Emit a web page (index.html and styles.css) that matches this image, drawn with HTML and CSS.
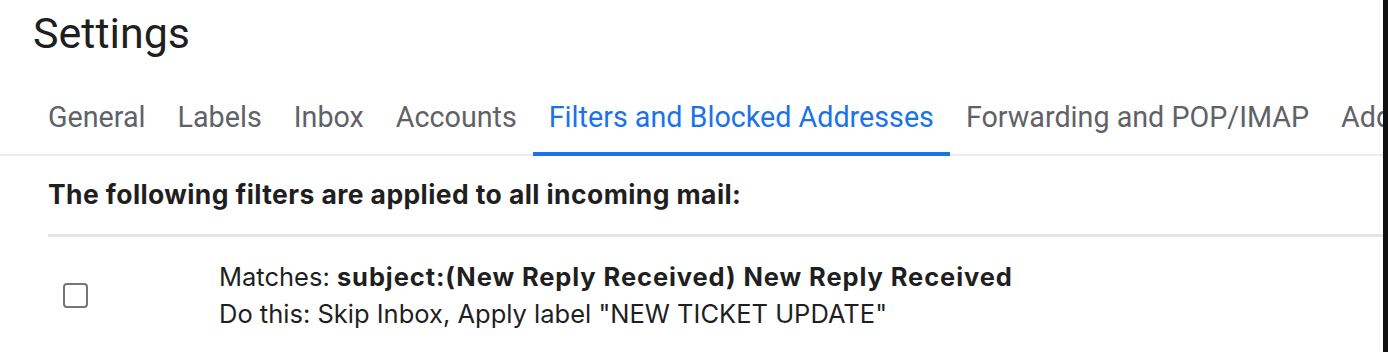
FILE: index.html
```html
<!DOCTYPE html>
<html>
  <head>
    <meta charset="UTF-8">
    <title>Settings</title>
    <link rel="stylesheet" href="styles.css">
  </head>
  <body>
    <div id="page">
      <div id="main">
        <h1 class="title">Settings</h1>
        <ul class="tabs">
          <li class="tab">General</li>
          <li class="tab">Labels</li>
          <li class="tab">Inbox</li>
          <li class="tab">Accounts</li>
          <li class="tab active">Filters and Blocked Addresses</li>
          <li class="tab">Forwarding and POP/IMAP</li>
          <li class="tab">Add-ons</li>
        </ul>
        <div id="content">
          <h4 class="heading">The following filters are applied to all incoming mail:</h4>
          <div class="filter">
            <div class="check-cell">
              <span class="checkbox"></span>
            </div>
            <div class="filter-text">
              <div>Matches: <b>subject:(New Reply Received) New Reply Received</b></div>
              <div>Do this: Skip Inbox, Apply label "NEW TICKET UPDATE"</div>
            </div>
          </div>
        </div>
      </div>
      <div id="edge"></div>
    </div>
  </body>
</html>
```

FILE: styles.css
```css
body {
    margin: 0;
    background-color: #fff;
    font-family: Roboto, "Liberation Sans", sans-serif;
    color: #1f1f1f;
}

#page {
    display: flex;
    height: 352px;
    overflow: hidden;
}

#main {
    flex: 1;
    min-width: 0;
    overflow: hidden;
}

#edge {
    width: 5px;
    background: #111;
}

.title {
    margin: 0;
    padding: 9px 0 0 33px;
    font-size: 43px;
    font-weight: 400;
    line-height: 48px;
    color: #1f1f1f;
}

.tabs {
    list-style-type: none;
    margin: 33px 0 0 0;
    padding: 0 0 0 32px;
    display: flex;
    white-space: nowrap;
    border-bottom: 2px solid #ececec;
}

.tab {
    padding: 9px 16px 17px 16px;
    font-size: 28.7px;
    line-height: 36px;
    color: #5f6368;
    border-bottom: 4px solid transparent;
    margin-bottom: -2px;
}

.tab.active {
    color: #1a73e8;
    border-bottom-color: #1a73e8;
}

#content {
    padding: 0 0 0 48px;
}

.heading {
    margin: 0;
    padding: 23px 0 25px 0;
    font-family: Inter, Roboto, sans-serif;
    font-size: 26.5px;
    letter-spacing: 0.4px;
    line-height: 30px;
    font-weight: 700;
    border-bottom: 3px solid #e6e6e6;
}

.filter {
    display: flex;
    padding-top: 21px;
}

.check-cell {
    width: 171px;
    display: flex;
    align-items: center;
}

.checkbox {
    width: 21px;
    height: 21px;
    margin-left: 15px;
    border: 2px solid #757575;
    border-radius: 4px;
}

.filter-text {
    font-family: Inter, Roboto, sans-serif;
    font-size: 25.5px;
    line-height: 37px;
    color: #1f1f1f;
}

.filter-text b {
    font-weight: 700;
    letter-spacing: 0.9px;
}
```
